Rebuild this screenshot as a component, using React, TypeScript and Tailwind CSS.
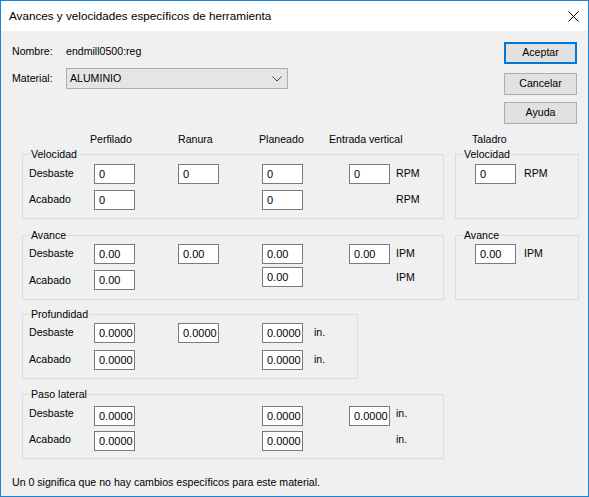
import React from 'react';

const ui = "font-['Liberation_Sans',Arial,sans-serif] text-[10.6px] text-black";

function Box({ v, className = '' }: { v: string; className?: string }) {
  return (
    <div
      className={`w-[41px] h-[20px] bg-white border border-[#7a7a7a] pl-[4px] text-[11px] leading-[18px] overflow-hidden whitespace-nowrap ${className}`}
    >
      {v}
    </div>
  );
}

function Group({ title, className = '', children }: { title: string; className?: string; children: React.ReactNode }) {
  return (
    <fieldset className={`border border-[#dcdcdc] m-0 px-0 ${className}`}>
      <legend className="ml-[7px] px-[1px] leading-[14px]">{title}</legend>
      {children}
    </fieldset>
  );
}

// cell widths: label 65 | perfilado 84 | ranura 84 | planeado 87 | entrada 47 | unit
type Cell = string | null;

function Row({ label, cells, unit, className = '' }: { label: string; cells: Cell[]; unit?: string; className?: string }) {
  const widths = ['w-[84px]', 'w-[84px]', 'w-[87px]', 'w-[47px]'];
  return (
    <div className={`flex items-center h-[20px] pl-[6px] ${className}`}>
      <div className="w-[65px]">{label}</div>
      {cells.map((c, i) => (
        <div key={i} className={widths[i]}>
          {c !== null && <Box v={c} />}
        </div>
      ))}
      {unit && <div>{unit}</div>}
    </div>
  );
}

function Button({ label, primary }: { label: string; primary?: boolean }) {
  return (
    <div
      className={`w-[73px] h-[22px] bg-[#e1e1e1] flex items-center justify-center ${
        primary ? 'border-2 border-[#0078d7]' : 'border border-[#adadad]'
      }`}
    >
      {label}
    </div>
  );
}

export default function App() {
  return (
    <div className={`w-[589px] h-[497px] border border-[#1883d7] flex flex-col bg-[#f0f0f0] ${ui}`}>
      {/* title bar */}
      <div className="h-[30px] bg-white flex items-center justify-between pl-[8px] pr-[9px] shrink-0">
        <span className="text-[11.7px] leading-[16px]">
          Avances y velocidades específicos de herramienta
        </span>
        <svg width="11" height="11" viewBox="0 0 11 11" className="mt-[1px]">
          <path d="M0.5 0.5 L10.5 10.5 M10.5 0.5 L0.5 10.5" stroke="#000" strokeWidth="1" fill="none" />
        </svg>
      </div>

      <div className="flex-1 flex flex-col">
        {/* top */}
        <div className="flex pt-[11px] pr-[11px]">
          <div className="pl-[11px] flex flex-col">
            <div className="flex items-center h-[20px]">
              <span className="w-[54px]">Nombre:</span>
              <span>endmill0500:reg</span>
            </div>
            <div className="flex items-center mt-[6px]">
              <span className="w-[54px]">Material:</span>
              <div className="w-[222px] h-[21px] bg-[#e5e5e5] border border-[#adadad] flex items-center justify-between pl-[3px] pr-[5px]">
                <span className="mt-[1px]">ALUMINIO</span>
                <svg width="10" height="6" viewBox="0 0 10 6">
                  <path d="M0.5 0.5 L5 5 L9.5 0.5" stroke="#444" strokeWidth="1" fill="none" />
                </svg>
              </div>
            </div>
          </div>
          <div className="ml-auto flex flex-col">
            <Button label="Aceptar" primary />
            <div className="mt-[9px]">
              <Button label="Cancelar" />
            </div>
            <div className="mt-[7px]">
              <Button label="Ayuda" />
            </div>
          </div>
        </div>

        {/* column headers */}
        <div className="flex mt-[8px] h-[14px] leading-[14px] pl-[89px]">
          <span className="w-[88px]">Perfilado</span>
          <span className="w-[81px]">Ranura</span>
          <span className="w-[70px]">Planeado</span>
          <span className="w-[143px]">Entrada vertical</span>
          <span>Taladro</span>
        </div>

        {/* velocidad */}
        <div className="flex mt-[1px] pl-[21px]">
          <Group title="Velocidad" className="w-[422px] pt-[3px] pb-[8px]">
            <Row label="Desbaste" cells={['0', '0', '0', '0']} unit="RPM" />
            <Row label="Acabado" cells={['0', null, '0', null]} unit="RPM" className="mt-[6px]" />
          </Group>
          <Group title="Velocidad" className="w-[124px] ml-[11px] pt-[3px]">
            <div className="flex items-center h-[20px] pl-[19px]">
              <Box v="0" />
              <span className="ml-[8px]">RPM</span>
            </div>
          </Group>
        </div>

        {/* avance */}
        <div className="flex mt-[9px] pl-[21px]">
          <Group title="Avance" className="w-[422px] pt-[2px] pb-[9px]">
            <Row label="Desbaste" cells={['0.00', '0.00', '0.00', '0.00']} unit="IPM" />
            <div className="flex items-start pl-[6px] mt-[3px]">
              <div className="w-[65px] mt-[3px] h-[20px] leading-[20px]">Acabado</div>
              <div className="w-[84px] mt-[3px]">
                <Box v="0.00" />
              </div>
              <div className="w-[84px]" />
              <div className="w-[87px]">
                <Box v="0.00" />
              </div>
              <div className="w-[47px]" />
              <div className="h-[20px] leading-[20px]">IPM</div>
            </div>
          </Group>
          <Group title="Avance" className="w-[124px] ml-[11px] pt-[2px]">
            <div className="flex items-center h-[20px] pl-[19px]">
              <Box v="0.00" />
              <span className="ml-[8px]">IPM</span>
            </div>
          </Group>
        </div>

        {/* profundidad */}
        <div className="flex mt-[7px] pl-[21px]">
          <Group title="Profundidad" className="w-[336px] pt-[2px] pb-[8px]">
            <div className="flex items-center h-[20px] pl-[6px]">
              <div className="w-[65px]">Desbaste</div>
              <div className="w-[84px]">
                <Box v="0.0000" />
              </div>
              <div className="w-[84px]">
                <Box v="0.0000" />
              </div>
              <Box v="0.0000" />
              <span className="ml-[11px]">in.</span>
            </div>
            <div className="flex items-center h-[20px] pl-[6px] mt-[7px]">
              <div className="w-[65px]">Acabado</div>
              <div className="w-[84px]">
                <Box v="0.0000" />
              </div>
              <div className="w-[84px]" />
              <Box v="0.0000" />
              <span className="ml-[11px]">in.</span>
            </div>
          </Group>
        </div>

        {/* paso lateral */}
        <div className="flex mt-[8px] pl-[21px]">
          <Group title="Paso lateral" className="w-[422px] pt-[5px] pb-[7px]">
            <div className="flex items-start pl-[6px]">
              <div className="w-[65px] leading-[15px]">Desbaste</div>
              <div className="w-[84px]">
                <Box v="0.0000" />
              </div>
              <div className="w-[84px]" />
              <div className="w-[87px]">
                <Box v="0.0000" />
              </div>
              <div className="w-[47px]">
                <Box v="0.0000" />
              </div>
              <div className="leading-[15px]">in.</div>
            </div>
            <div className="flex items-start pl-[6px] mt-[5px]">
              <div className="w-[65px] leading-[16px]">Acabado</div>
              <div className="w-[84px]">
                <Box v="0.0000" />
              </div>
              <div className="w-[84px]" />
              <div className="w-[87px]">
                <Box v="0.0000" />
              </div>
              <div className="w-[47px]" />
              <div className="leading-[16px]">in.</div>
            </div>
          </Group>
        </div>

        <div className="mt-[16px] pl-[11px] leading-[14px]">
          Un 0 significa que no hay cambios específicos para este material.
        </div>
      </div>
    </div>
  );
}
